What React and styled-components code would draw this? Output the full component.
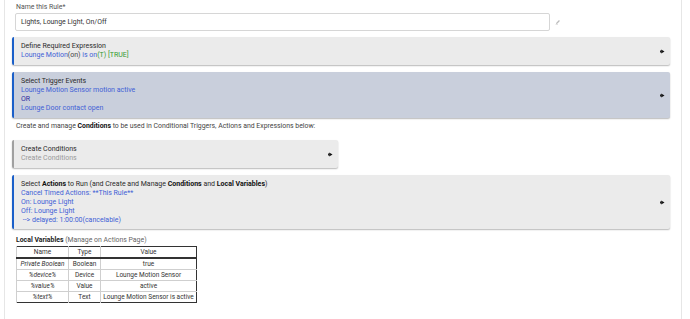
import React from "react";
import styled, { createGlobalStyle } from "styled-components";

const GlobalStyle = createGlobalStyle`
  html, body {
    margin: 0;
    padding: 0;
    background: #ffffff;
  }
  body {
    font-family: Roboto, "Liberation Sans", sans-serif;
    font-size: 7px;
    color: #222;
  }
`;

const Page = styled.div`
  margin-left: 4px;
  width: 678px;
  height: 319px;
  border-left: 1px solid #e6e6e6;
  border-right: 1px solid #e6e6e6;
  padding: 3px 0 0 7px;
  box-sizing: border-box;
  display: flex;
  flex-direction: column;
  align-items: flex-start;
`;

const Label = styled.div`
  color: #555;
  font-size: 6.9px;
  line-height: 9px;
  padding-left: 4px;
`;

const InputRow = styled.div`
  display: flex;
  align-items: center;
  gap: 5px;
  margin-left: 3px;
  margin-top: 1px;
`;

const TextInput = styled.div`
  width: 535px;
  height: 18px;
  box-sizing: border-box;
  border: 1px solid #d6d6d6;
  border-radius: 2px;
  padding-left: 5px;
  display: flex;
  align-items: center;
  color: #333;
  font-size: 6.9px;
`;

const Panel = styled.div`
  width: ${(p) => (p.$narrow ? 326 : 658)}px;
  box-sizing: border-box;
  margin-top: ${(p) => p.$top || 7}px;
  background: ${(p) => p.$bg || "#ebebeb"};
  border-left: 2px solid ${(p) => p.$edge || "#1a5fc9"};
  border-radius: 2px;
  box-shadow: 0 1px 1.5px rgba(0, 0, 0, 0.28);
  padding: ${(p) => p.$pad || 5}px 5px ${(p) => p.$pad || 5}px 7px;
  display: flex;
  align-items: center;
  justify-content: space-between;
`;

const Lines = styled.div`
  display: flex;
  flex-direction: column;
  font-size: 7px;
  line-height: 9px;
`;

const Title = styled.div`
  color: #2a2a2a;
  b {
    font-weight: 700;
    color: #111;
  }
`;

const Blue = styled.div`
  color: ${(p) => p.$c || "#4161d6"};
  white-space: pre;
`;

const Span = styled.span`
  color: ${(p) => p.$c};
`;

const Muted = styled.div`
  color: #9a9a9a;
`;

const Note = styled.div`
  margin-top: 4px;
  padding-left: 4px;
  font-size: 6.9px;
  line-height: 9px;
  color: #444;
  b {
    color: #111;
  }
`;

const VarsHeading = styled.div`
  margin-top: 7px;
  padding-left: 4px;
  font-size: 6.9px;
  line-height: 9px;
  color: #666;
  b {
    color: #222;
  }
`;

const Table = styled.table`
  margin-left: 4px;
  margin-top: 1px;
  width: 177px;
  table-layout: fixed;
  border-collapse: collapse;
  border: 1px solid #333;
  font-size: 6.5px;
  color: #333;
`;

const Th = styled.th`
  font-weight: 400;
  height: 10px;
  padding: 0;
  border-bottom: 2px solid #333;
  border-left: 1px solid #cfcfcf;
  width: ${(p) => p.$w}px;
  line-height: 10px;
`;

const Td = styled.td`
  height: 10px;
  padding: 0 1px;
  line-height: 10px;
  text-align: center;
  white-space: nowrap;
  overflow: hidden;
  border-top: 1px solid #cfcfcf;
  border-left: 1px solid #cfcfcf;
  font-style: ${(p) => (p.$italic ? "italic" : "normal")};
`;

const Arrow = () => (
  <svg width="5" height="5" viewBox="0 0 5 5">
    <rect x="0" y="1.5" width="1.2" height="2" fill="#222" />
    <path d="M1.2 0.5 L4.5 2.5 L1.2 4.5 Z" fill="#111" />
  </svg>
);

const Pencil = () => (
  <svg width="6" height="6" viewBox="0 0 6 6">
    <path d="M1 5 L1.3 3.8 L4 1.1 L4.9 2 L2.2 4.7 Z" fill="#bbb" />
    <path d="M0.5 5.6 H3" stroke="#ccc" strokeWidth="0.6" />
  </svg>
);

const vars = [
  ["Private Boolean", "Boolean", "true"],
  ["%device%", "Device", "Lounge Motion Sensor"],
  ["%value%", "Value", "active"],
  ["%text%", "Text", "Lounge Motion Sensor is active"],
];

export default function App() {
  return (
    <>
      <GlobalStyle />
      <Page>
        <Label>Name this Rule*</Label>
        <InputRow>
          <TextInput>Lights, Lounge Light, On/Off</TextInput>
          <Pencil />
        </InputRow>

        <Panel $top={6}>
          <Lines>
            <Title>Define Required Expression</Title>
            <Blue>
              Lounge Motion<Span $c="#444">(on)</Span> is on
              <Span $c="#2f9a2f">(T) [TRUE]</Span>
            </Blue>
          </Lines>
          <Arrow />
        </Panel>

        <Panel $bg="#c9cfdc">
          <Lines>
            <Title>Select Trigger Events</Title>
            <Blue>Lounge Motion Sensor motion active</Blue>
            <Blue $c="#2b2ba0">OR</Blue>
            <Blue>Lounge Door contact open</Blue>
          </Lines>
          <Arrow />
        </Panel>

        <Note>
          Create and manage <b>Conditions</b> to be used in Conditional
          Triggers, Actions and Expressions below:
        </Note>

        <Panel $top={9} $edge="#a0a0a0" $narrow>
          <Lines>
            <Title>Create Conditions</Title>
            <Muted>Create Conditions</Muted>
          </Lines>
          <Arrow />
        </Panel>

        <Panel $pad={4.5}>
          <Lines>
            <Title>
              Select <b>Actions</b> to Run (and Create and Manage{" "}
              <b>Conditions</b> and <b>Local Variables</b>)
            </Title>
            <Blue>Cancel Timed Actions: **This Rule**</Blue>
            <Blue>On: Lounge Light</Blue>
            <Blue>Off: Lounge Light</Blue>
            <Blue> --&gt; delayed: 1:00:00(cancelable)</Blue>
          </Lines>
          <Arrow />
        </Panel>

        <VarsHeading>
          <b>Local Variables</b> (Manage on Actions Page)
        </VarsHeading>
        <Table>
          <thead>
            <tr>
              <Th $w={51}>Name</Th>
              <Th $w={31}>Type</Th>
              <Th $w={95}>Value</Th>
            </tr>
          </thead>
          <tbody>
            {vars.map(([name, type, value]) => (
              <tr key={name}>
                <Td $italic>{name}</Td>
                <Td>{type}</Td>
                <Td>{value}</Td>
              </tr>
            ))}
          </tbody>
        </Table>
      </Page>
    </>
  );
}
